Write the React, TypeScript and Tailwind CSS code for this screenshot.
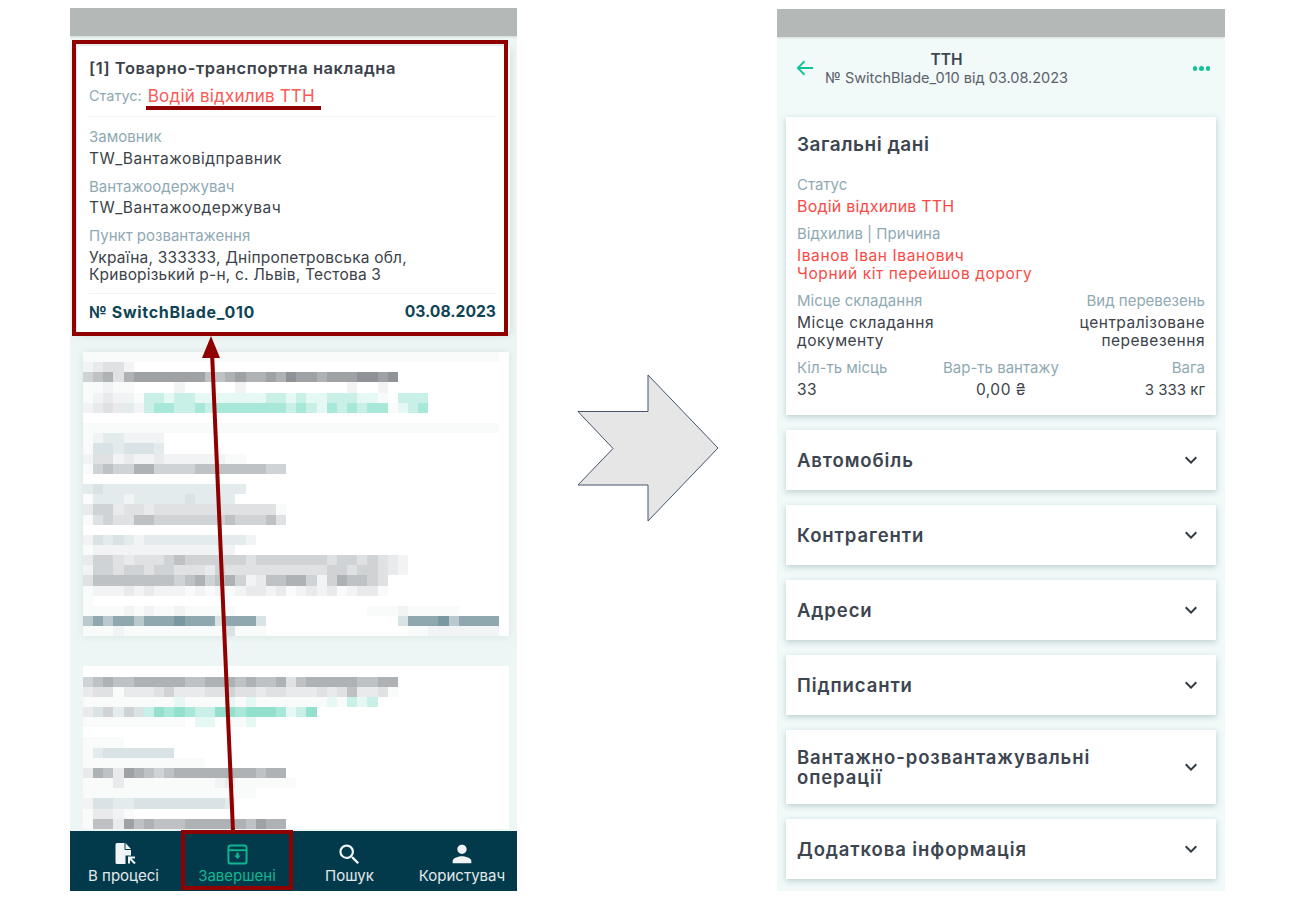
import { MdSearch, MdPerson, MdKeyboardArrowDown } from "react-icons/md";

const font = "font-['Inter','Noto_Sans',sans-serif]";

// colours of the blurred (pixelated) cards
const shade: Record<string, string> = {
  ".": "bg-transparent",
  "0": "bg-[#f9fafa]",
  "1": "bg-[#f2f3f4]",
  "2": "bg-[#e8eaeb]",
  "3": "bg-[#dfe1e3]",
  "4": "bg-[#d0d3d5]",
  "5": "bg-[#bfc2c5]",
  "6": "bg-[#aeb2b5]",
  "7": "bg-[#9ea2a5]",
  "8": "bg-[#8f9397]",
  a: "bg-[#e6f8f4]",
  b: "bg-[#c9f0e6]",
  c: "bg-[#a8e8d8]",
  d: "bg-[#92e0cd]",
  p: "bg-[#e4ebed]",
  x: "bg-[#d9e3e6]",
  y: "bg-[#b9c9ce]",
  z: "bg-[#8fa8b0]",
  w: "bg-[#7a98a2]",
};

const blurredOne = [
  "00000000000000000000000000000000000000000",
  "12331",
  "4563677777775567667687767778878",
  "00100....1.....1..........1..1",
  "012110bbabbaaaaaaabbabaabbbaa0.bbb",
  "1232p1bccbbcbcccccccbcbacbcbcc0abc",
  ".",
  "00000000000000000000000000000000000000000",
  "01pp1111",
  "0xxpxxxp",
  "1331211211111100",
  "04544664444555555544",
  ".",
  "pxpppppppppppppp",
  "0ppp1pppppxpppp",
  "24423323333333333330",
  "03433554444444544453",
  ".",
  "1xpxp1pppppppppp1",
  "011111111111111",
  "24432333454444443444444434434321",
  "14434434433324333333333344344321",
  "355555555456456412556641465543",
  "011121211101010122120121201220",
  "0",
  "000010100100000.............000100000",
  "yzyzzyzzzwzzzxzzzx.............xzzzwyzzzz",
  "00010000000000x000..............001111111",
];

const blurredTwo = [
  ".",
  "4565566666556665655635666665566",
  "2330222342223343323322232352230",
  "000000000a0000a0a0000000a0bab",
  "2x4p4xbdcdcbbddcdddcabd",
  "0000000000.aa.00a",
  ".",
  "0000",
  "0pxxxxxxx",
  "000000000000",
  "26527654566666666566",
  "000200000000012000000",
  "00000000000000000",
  "1xxppxxxxxxxxxp",
  "02210",
  "05527565556666665766",
];

function Mosaic({ rows }: { rows: string[] }) {
  return (
    <div>
      {rows.map((row, i) => (
        <div key={i} className="flex h-[10.17px]">
          {row.split("").map((c, j) => (
            <div key={j} className={`h-full w-[10.17px] ${shade[c] ?? "bg-transparent"}`} />
          ))}
        </div>
      ))}
    </div>
  );
}

function StatusBar() {
  return <div className="h-[28px] shrink-0 bg-[#b4b9b8] shadow-[0_1px_2px_rgba(0,0,0,0.12)]" />;
}

function Label({ children }: { children: React.ReactNode }) {
  return <div className="text-[15px] leading-[18px] text-[#8fa9b3]">{children}</div>;
}

function InvoiceCard() {
  const value = "text-[15.5px] text-[#3b4249]";
  return (
    <div className="mx-[7px] mt-[10px] h-[287px] rounded-[4px] bg-white pt-[12px] pr-[14px] pl-[12px] shadow-[0_2px_8px_rgba(100,140,140,0.25)]">
      <div className="text-[16.5px] leading-[20px] font-semibold tracking-[0.55px] text-[#3b4249]">[1] Товарно-транспортна накладна</div>
      <div className="mt-[8px] flex items-center gap-[6px] border-b border-[#f0f3f3] pb-[10px]">
        <span className="text-[14.5px] leading-[20px] text-[#8fa9b3]">Статус:</span>
        <span className="text-[17px] leading-[20px] tracking-[0.2px] text-[#fb5a55]">Водій відхилив ТТН</span>
      </div>
      <div className="mt-[11px]">
        <Label>Замовник</Label>
        <div className={`mt-[4px] leading-[18px] tracking-[0.5px] ${value}`}>TW_Вантажовідправник</div>
      </div>
      <div className="mt-[10px]">
        <Label>Вантажоодержувач</Label>
        <div className={`mt-[3px] leading-[18px] tracking-[0.5px] ${value}`}>TW_Вантажоодержувач</div>
      </div>
      <div className="mt-[10px] border-b border-[#f0f3f3] pb-[10px]">
        <Label>Пункт розвантаження</Label>
        <div className={`mt-[4px] leading-[17px] tracking-[0.2px] ${value}`}>
          Україна, 333333, Дніпропетровська обл,
          <br />
          Криворізький р-н, с. Львів, Тестова 3
        </div>
      </div>
      <div className="mt-[8px] flex justify-between leading-[20px] font-bold text-[#0f4455]">
        <span className="text-[16px] tracking-[0.7px]">№ SwitchBlade_010</span>
        <span className="text-[15.7px]">03.08.2023</span>
      </div>
    </div>
  );
}

function DocIcon() {
  return (
    <svg className="ml-[3px]" width="24" height="24" viewBox="0 0 24 24" fill="#f1f4f5">
      <path d="M2.5 2.5A1.5 1.5 0 0 1 4 1h8.500L18 7v6.500h-5.500V22H4a1.500 1.500 0 0 1-1.500-1.500z" />
      <path d="M12 1v6.500h6" fill="none" stroke="#023a4c" strokeWidth="1" />
      <path d="M15 14.500h7v2h-3.600l4.300 4.300-1.400 1.400-4.300-4.300V21.500h-2z" />
    </svg>
  );
}

function ArchiveIcon() {
  return (
    <svg width="21" height="21" viewBox="0 0 22 22" fill="none" stroke="#11b691" strokeWidth="2">
      <rect x="1.5" y="1.5" width="19" height="19" rx="2.5" />
      <path d="M1.5 6.5h19" />
      <path d="M11 9v4" strokeWidth="2.4" />
      <path d="M7.6 12h6.8L11 15.8z" fill="#11b691" stroke="none" />
    </svg>
  );
}

function NavItem({ icon, label, active, className }: { icon: React.ReactNode; label: string; active?: boolean; className: string }) {
  return (
    <div className={`flex flex-col items-center pt-[11px] ${className}`}>
      <div className="flex h-[24px] items-center justify-center">{icon}</div>
      <div className={`mt-[1px] text-[15px] leading-[18px] whitespace-nowrap ${active ? "text-[#11b691]" : "text-[#e3e9eb]"}`}>{label}</div>
    </div>
  );
}

function LeftPhone() {
  return (
    <div className="relative flex h-[883px] w-[447px] shrink-0 flex-col overflow-hidden bg-[#eef6f5]">
      <StatusBar />
      <div className="min-h-0 flex-1 overflow-hidden">
        <InvoiceCard />
        <div className="mt-[19px] ml-[13px] w-[426px] bg-white shadow-[0_0_8px_rgba(120,160,160,0.2)]">
          <Mosaic rows={blurredOne} />
        </div>
        <div className="mt-[30px] ml-[13px] w-[426px] bg-white">
          <Mosaic rows={blurredTwo} />
        </div>
      </div>
      <div className="flex h-[60px] shrink-0 bg-[#023a4c]">
        <NavItem className="w-[107px]" label="В процесі" icon={<DocIcon />} />
        <NavItem className="w-[120px]" label="Завершені" active icon={<ArchiveIcon />} />
        <NavItem className="w-[105px]" label="Пошук" icon={<MdSearch size={27} color="#f1f4f5" />} />
        <NavItem className="w-[115px] pl-[5px]" label="Користувач" icon={<MdPerson size={28} color="#f1f4f5" />} />
      </div>
    </div>
  );
}

function Card({ children, className }: { children: React.ReactNode; className: string }) {
  return <div className={`bg-white shadow-[0_2px_6px_rgba(90,125,125,0.35)] ${className}`}>{children}</div>;
}

function Section({ title, className = "h-[60px]" }: { title: React.ReactNode; className?: string }) {
  return (
    <Card className={`flex items-center justify-between pr-[13px] pl-[11px] ${className}`}>
      <div className="text-[18.5px] leading-[20px] font-semibold tracking-[0.9px] text-[#3d4550]">{title}</div>
      <MdKeyboardArrowDown size={24} color="#333a42" />
    </Card>
  );
}

function DetailsPhone() {
  const value = "text-[15.5px] leading-[17.5px] tracking-[0.5px] text-[#3b4249]";
  const red = "text-[15.5px] leading-[17.5px] tracking-[0.6px] text-[#fb4a46]";
  return (
    <div className="mt-[1px] flex h-[882px] w-[448px] shrink-0 flex-col overflow-hidden bg-[#f1f9f9]">
      <StatusBar />
      <div className="flex h-[80px] shrink-0 items-start pt-[14px] pr-[15px] pl-[19px]">
        <svg className="mt-[8px] shrink-0" width="18" height="18" viewBox="0 0 20 18" fill="none" stroke="#10c49a" strokeWidth="2">
          <path d="M19 9H2M9.500 1.500 2 9l7.500 7.500" />
        </svg>
        <div className="ml-[11px] text-center">
          <div className="text-[15.5px] leading-[18px] font-semibold text-[#3d4550]">ТТН</div>
          <div className="text-[14.5px] leading-[18px] text-[#5c6269]">№ SwitchBlade_010 від 03.08.2023</div>
        </div>
        <div className="mt-[15px] ml-auto flex gap-[2px]">
          <span className="h-[4.5px] w-[4.5px] rounded-full bg-[#10c49a]" />
          <span className="h-[4.5px] w-[4.5px] rounded-full bg-[#10c49a]" />
          <span className="h-[4.5px] w-[4.5px] rounded-full bg-[#10c49a]" />
        </div>
      </div>
      <div className="flex flex-col gap-[15px] pr-[9px] pl-[9px]">
        <Card className="h-[298px] px-[11px] pt-[17px]">
          <div className="text-[19px] leading-[22px] font-semibold tracking-[0.5px] text-[#3d4550]">Загальні дані</div>
          <div className="mt-[20px]">
            <Label>Статус</Label>
            <div className="mt-[3px] text-[16px] leading-[18px] tracking-[0.2px] text-[#fb4a46]">Водій відхилив ТТН</div>
          </div>
          <div className="mt-[10px]">
            <Label>Відхилив | Причина</Label>
            <div className={`mt-[4px] ${red}`}>
              Іванов Іван Іванович
              <br />
              Чорний кіт перейшов дорогу
            </div>
          </div>
          <div className="mt-[10px] flex justify-between">
            <div>
              <Label>Місце складання</Label>
              <div className={`mt-[4px] ${value}`}>
                Місце складання
                <br />
                документу
              </div>
            </div>
            <div className="text-right">
              <Label>Вид перевезень</Label>
              <div className={`mt-[4px] ${value}`}>
                централізоване
                <br />
                перевезення
              </div>
            </div>
          </div>
          <div className="mt-[10px] grid grid-cols-[130px_1fr_130px]">
            <div>
              <Label>Кіл-ть місць</Label>
              <div className={`mt-[4px] ${value}`}>33</div>
            </div>
            <div className="text-center">
              <Label>Вар-ть вантажу</Label>
              <div className={`mt-[4px] ${value}`}>0,00 ₴</div>
            </div>
            <div className="text-right">
              <Label>Вага</Label>
              <div className="mt-[4px] text-[15px] leading-[17.5px] text-[#3b4249]">3 333 кг</div>
            </div>
          </div>
        </Card>
        <Section title="Автомобіль" />
        <Section title="Контрагенти" />
        <Section title="Адреси" />
        <Section title="Підписанти" />
        <Section
          title={
            <>
              Вантажно-розвантажувальні
              <br />
              операції
            </>
          }
          className="h-[74px]"
        />
        <Section title="Додаткова інформація" />
      </div>
    </div>
  );
}

export default function App() {
  return (
    <div className={`relative h-[900px] w-[1300px] overflow-hidden bg-white pt-[8px] pl-[70px] ${font}`}>
      <div className="flex items-start">
        <LeftPhone />
        <svg className="mt-[366px] ml-[60px] shrink-0" width="142" height="148" viewBox="577 374 142 148">
          <path d="M578 411.500h70V375l70 73-70 73v-36h-70l35-36.500z" fill="#e6e6e6" stroke="#44546a" strokeWidth="1" />
        </svg>
        <div className="ml-[58px]">
          <DetailsPhone />
        </div>
      </div>
      {/* red callouts laid over the left screen */}
      <div className="absolute top-[40px] left-[72px] h-[296px] w-[436px] border-[4px] border-[#8f0000]" />
      <div className="absolute top-[106px] left-[146px] h-[3.5px] w-[175px] bg-[#8f0000]" />
      <div className="absolute top-[830px] left-[181px] h-[60px] w-[112px] border-[4px] border-[#8f0000]" />
      <svg className="absolute top-[335px] left-[195px]" width="50" height="497" viewBox="195 335 50 497">
        <path d="M233 831 212 352" stroke="#8f0000" strokeWidth="4" fill="none" />
        <path d="M211 336 220 358H202z" fill="#8f0000" />
      </svg>
    </div>
  );
}
